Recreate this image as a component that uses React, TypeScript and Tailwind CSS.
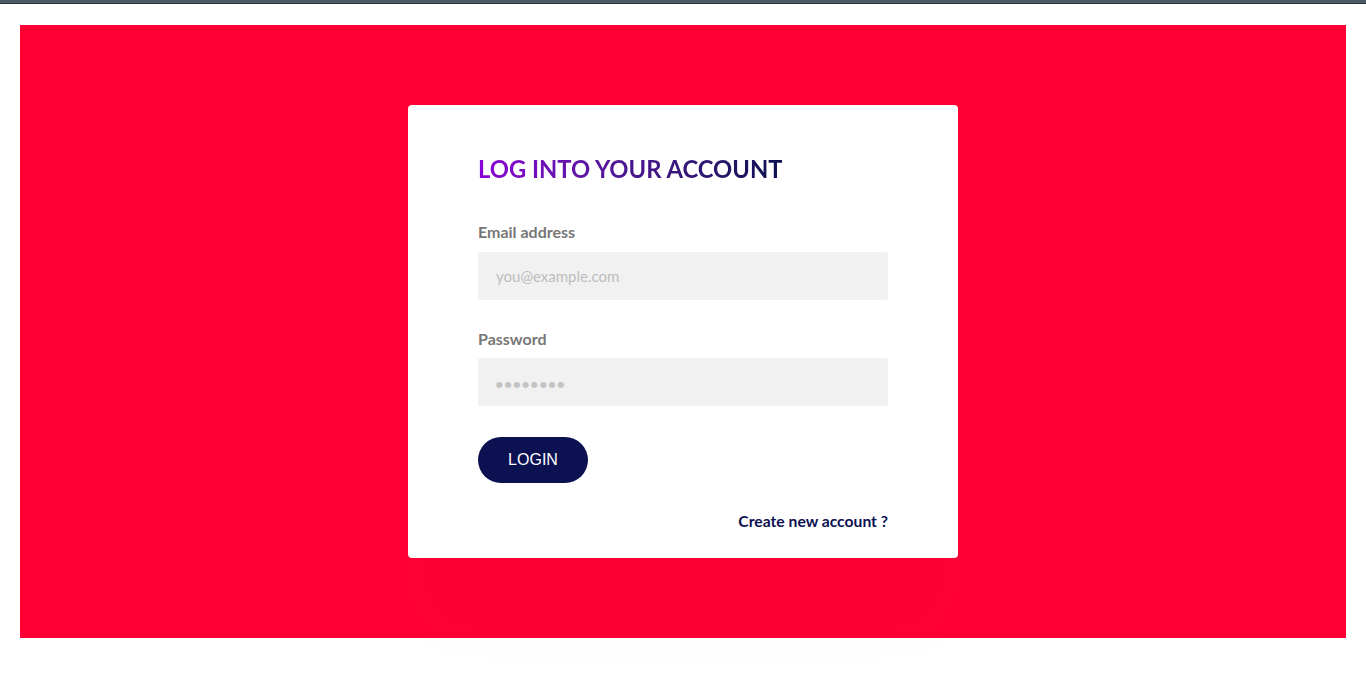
export default function App() {
  return (
    <div className="min-h-[674px] bg-white" style={{ fontFamily: "Lato, 'Liberation Sans', sans-serif" }}>
      <div className="h-[3px] bg-[#4a5c64]" />
      <div className="h-px bg-[#27343b]" />
      <div className="px-[20px] pt-[21px]">
        <div className="flex h-[613px] items-center justify-center bg-[#ff0035]">
          <div className="w-[550px] h-[453px] rounded-[4px] bg-white px-[70px] pt-[49px] shadow-[0_85px_60px_-15px_rgba(0,0,0,0.025)]">
            <h1 className="bg-gradient-to-r from-[#8a00d6] to-[#0c1150] bg-clip-text text-[23.75px] font-bold leading-[30px] text-transparent w-fit">
              LOG INTO YOUR ACCOUNT
            </h1>
            <div className="mt-[38px]">
              <label className="block text-[16px] font-bold leading-[20px] text-[#777]">Email address</label>
              <input
                type="email"
                placeholder="you@example.com"
                className="mt-[10px] block h-[48px] w-full rounded-[3px] bg-[#f1f1f1] px-[18px] text-[15px] text-[#555] outline-none placeholder:text-[#bdbdbd]"
                style={{ fontFamily: "Lato, sans-serif" }}
              />
            </div>
            <div className="mt-[29px]">
              <label className="block text-[16px] font-bold leading-[20px] text-[#777]">Password</label>
              <input
                type="password"
                placeholder="●●●●●●●●"
                className="mt-[9px] block h-[48px] w-full rounded-[3px] bg-[#f1f1f1] px-[18px] text-[15px] text-[#555] outline-none placeholder:text-[#c4c4c4] placeholder:text-[8px] placeholder:tracking-[1.8px]"
                style={{ fontFamily: "'DejaVu Sans', sans-serif" }}
              />
            </div>
            <button
              className="mt-[31px] h-[46px] w-[110px] rounded-full bg-[#0c1152] text-[16px] text-white"
              style={{ fontFamily: "'Liberation Sans', Arial, sans-serif" }}
            >
              LOGIN
            </button>
            <div className="mt-[28px] flex justify-end">
              <a className="text-[15.7px] font-bold leading-[20px] text-[#0c1152]">Create new account ?</a>
            </div>
          </div>
        </div>
      </div>
    </div>
  );
}
